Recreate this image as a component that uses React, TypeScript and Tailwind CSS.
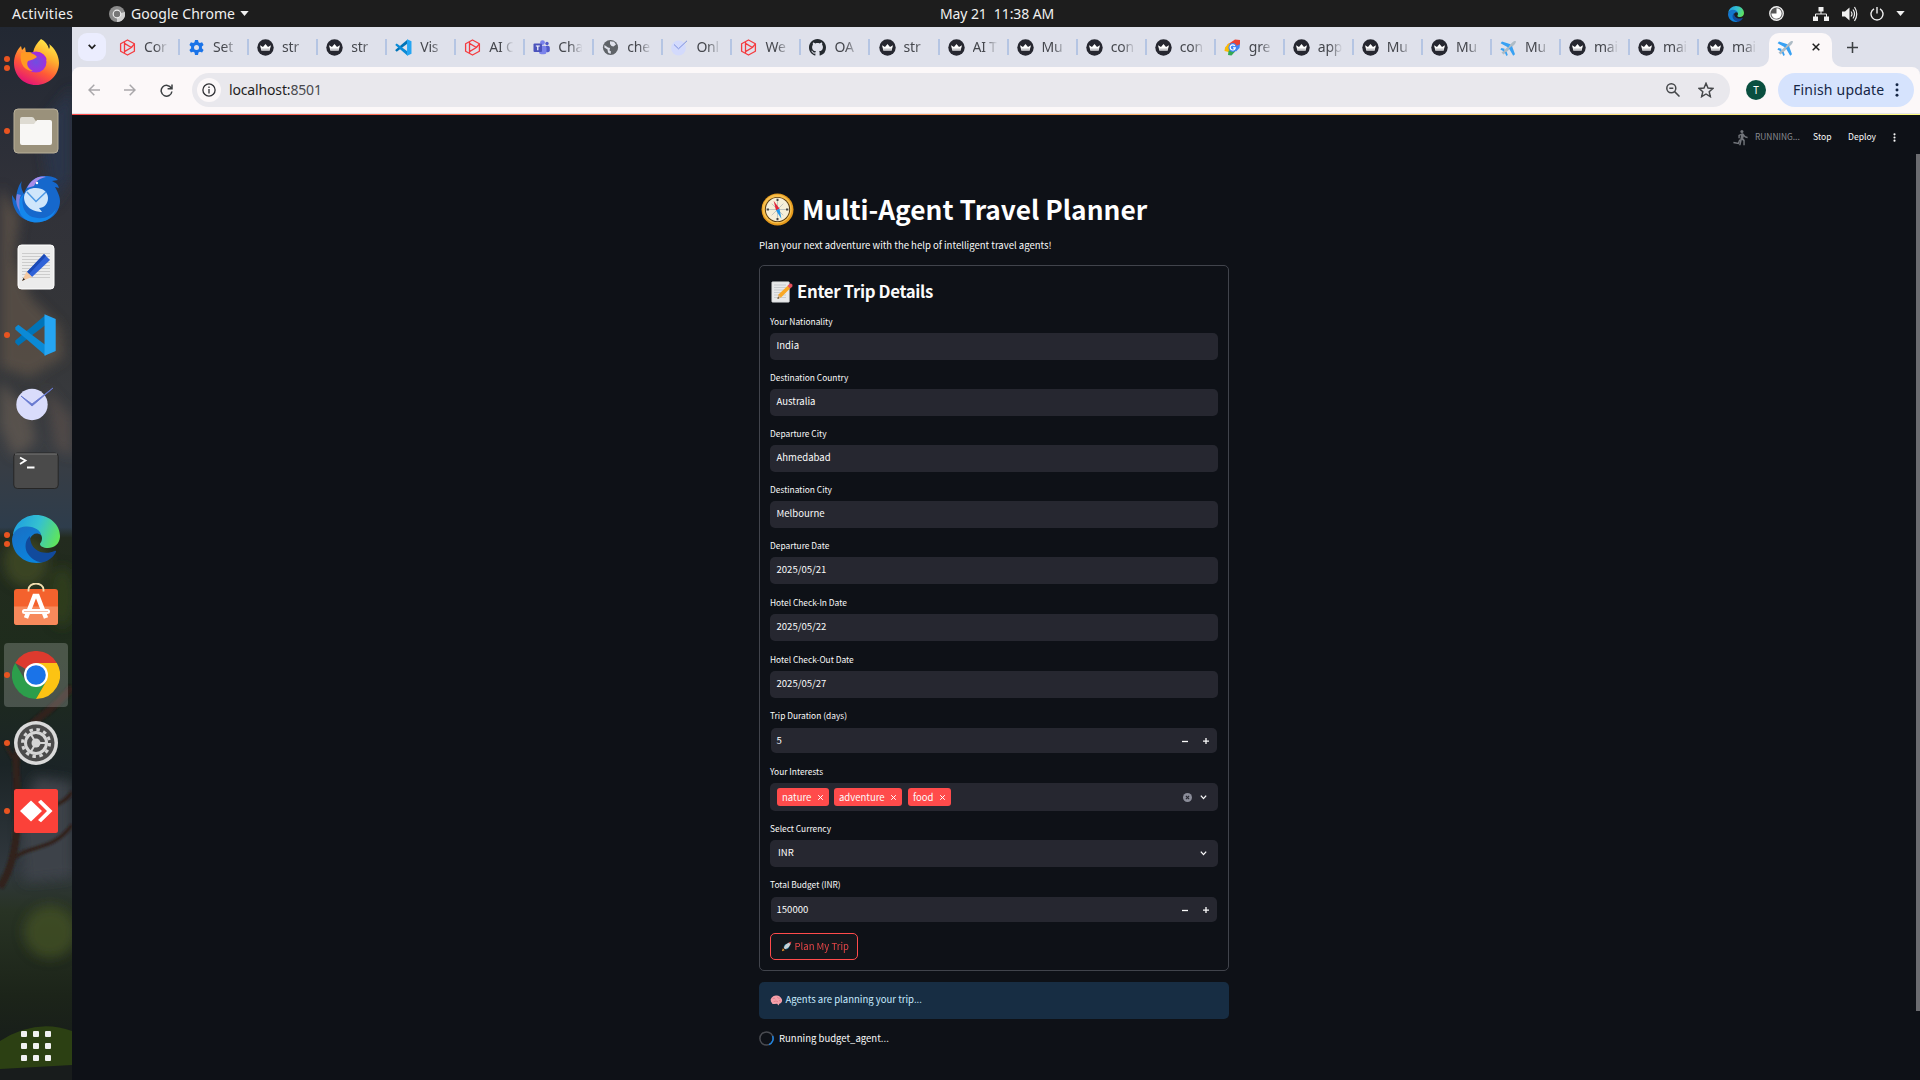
import React from "react";

const CROWN = "crown";
const TABS: [string, string][] = [
  ["pent", "Cor"], ["gear", "Set"], [CROWN, "str"], [CROWN, "str"], ["vs", "Vis"], ["pent", "AI C"], ["teams", "Cha"],
  ["globe", "che"], ["tick", "Onl"], ["pent", "We"], ["github", "OA"], [CROWN, "str"], [CROWN, "AI T"], [CROWN, "Mu"],
  [CROWN, "con"], [CROWN, "con"], ["google", "gre"], [CROWN, "app"], [CROWN, "Mu"], [CROWN, "Mu"], ["plane", "Mu"],
  [CROWN, "mai"], [CROWN, "mai"], [CROWN, "mai"],
];

const VsCode = () => (
  <>
    <path d="M3 68 10 75 74 26V3L3 63Z" fill="#0074b8" />
    <path d="M3 32 10 26 74 74V98L3 37Z" fill="#0b8ad6" />
    <path d="M71 2 97 13V87L71 98Z" fill="#25a5f2" />
  </>
);

const Plane = () => (
  <g>
    <path d="M1.5 13.4 4.5 11 12.5 3.2C13.8 2 15.3 1.6 15.8 2.2 16.3 2.8 15.6 4.2 14.5 5.4L6 13.5 3.5 15.5Z" fill="#aebcc6" />
    <path d="M10.5 5.2 2 2.4 .6 4.2 8.2 8.6ZM12 7 15 15.2 13.2 16.8 9 9.6ZM4.6 9.800 1.400 9 .4 10.500 4 12.500ZM6.600 12.800 7.800 16 6.400 17 4.800 13.600Z" fill="#38a1f3" />
  </g>
);

function Favicon({ kind }: { kind: string }) {
  return (
    <svg viewBox="0 0 17 17" className="h-[17px] w-[17px] shrink-0">
      {kind === "crown" && (
        <>
          <circle cx="8.5" cy="8.5" r="8.2" fill="#262730" />
          <path d="M3 6.2 6 8 8.5 5 11 8 14 6.2 12.6 11.5H4.4Z" fill="#fff" />
          <path d="M4 9.4H13L12.6 11.5H4.4Z" fill="#c8c8cc" />
        </>
      )}
      {kind === "pent" && (
        <g fill="none" stroke="#f43b3f" strokeWidth="1.3" strokeLinejoin="round">
          <path d="M8.5 1 15.4 4.8V12.2L8.5 16 1.6 12.2V4.8Z" />
          <path d="M5.5 3 V14M5.5 4.4 12.4 8.5 5.5 12.6M12.4 8.5 15.4 4.8" />
        </g>
      )}
      {kind === "gear" && (
        <g fill="#1a73e8">
          <path d="M7 1h3l.5 2.2 1.4.8 2.2-.7 1.5 2.6-1.7 1.6v1.8l1.7 1.6-1.5 2.6-2.2-.7-1.4.8L10 16H7l-.5-2.4-1.4-.8-2.2.7-1.5-2.6 1.7-1.6V7.500L1.400 5.900l1.500-2.600 2.200.7 1.400-.8Z" />
          <circle cx="8.500" cy="8.500" r="2.500" fill="#dfe1eb" />
        </g>
      )}
      {kind === "vs" && <g transform="scale(.17)"><VsCode /></g>}
      {kind === "teams" && (
        <g>
          <circle cx="9.500" cy="3.600" r="2.400" fill="#7b83eb" />
          <circle cx="14" cy="4.500" r="1.700" fill="#5059c9" />
          <rect x="12" y="6.800" width="4.800" height="6.500" rx="2" fill="#5059c9" />
          <rect x="6" y="6.800" width="7.500" height="8.500" rx="2.500" fill="#7b83eb" />
          <rect x=".5" y="4.500" width="8.500" height="8.500" rx="1" fill="#4b53bc" />
          <path d="M2.800 7H6.800M4.800 7V11.300" stroke="#fff" strokeWidth="1.200" />
        </g>
      )}
      {kind === "globe" && (
        <>
          <circle cx="8.500" cy="8.500" r="7.600" fill="#5f6368" />
          <path d="M2.500 6 6 8.500 8 9 7.500 11.500 9 12.500 8.500 15 6 13.500 5.500 10.500 2.300 8.500ZM8 2.200 12 2.800 14 5.500 11.500 7.500 9.500 7 8 5Z" fill="#dfe1eb" />
        </>
      )}
      {kind === "tick" && (
        <>
          <circle cx="7.500" cy="9" r="7.400" fill="#d3dafc" />
          <path d="M3 5.500 7.500 9.800 16 1.800" fill="none" stroke="#7d90de" strokeWidth="1" />
        </>
      )}
      {kind === "github" && (
        <path
          transform="scale(1.0625)"
          fill="#24292f"
          fillRule="evenodd"
          d="M8 0C3.58 0 0 3.58 0 8c0 3.54 2.29 6.53 5.47 7.59.4.07.55-.17.55-.38 0-.19-.01-.82-.01-1.49-2.01.37-2.53-.49-2.690-.94-.09-.23-.48-.94-.82-1.130-.28-.15-.68-.52-.01-.53.63-.01 1.080.58 1.230.82.72 1.210 1.870.87 2.330.66.07-.52.28-.87.51-1.070-1.780-.2-3.640-.89-3.640-3.950 0-.87.31-1.590.82-2.150-.08-.2-.36-1.020.08-2.120 0 0 .67-.21 2.200.82.64-.18 1.320-.27 2-.27s1.360.09 2 .27c1.530-1.040 2.200-.82 2.200-.82.44 1.100.16 1.920.08 2.120.51.56.82 1.270.82 2.150 0 3.070-1.870 3.750-3.650 3.950.29.25.54.73.54 1.480 0 1.070-.01 1.930-.01 2.200 0 .21.15.46.55.38A8.013 8.013 0 0 0 16 8c0-4.420-3.580-8-8-8Z"
        />
      )}
      {kind === "google" && (
        <>
          <path d="M3 6 11 .5 16 1V6L8.500 8.500Z" fill="#ea4335" />
          <path d="M1 8.500 5 4 8 8.500 4.500 13 .5 12Z" fill="#fbbc04" />
          <path d="M4.500 12 10 8 12.500 11 7.500 16.500 4 16Z" fill="#34a853" />
          <path d="M16 5 15.500 9 12 12.500 9 9Z" fill="#4285f4" />
          <circle cx="8.800" cy="8.500" r="4.400" fill="#4285f4" />
          <path d="M10.800 6.800A2.600 2.600 0 1 0 11.300 8.800H9" fill="none" stroke="#fff" strokeWidth="1.200" />
        </>
      )}
      {kind === "plane" && <Plane />}
    </svg>
  );
}

function EdgeArt() {
  return (
    <>
      <defs>
        <linearGradient id="edgeTop" x1="0" y1=".3" x2="1" y2=".6">
          <stop offset="0" stopColor="#1e9fe0" />
          <stop offset=".5" stopColor="#35c1d0" />
          <stop offset="1" stopColor="#5fe45c" />
        </linearGradient>
        <linearGradient id="edgeLow" x1="0" y1="0" x2=".6" y2="1">
          <stop offset="0" stopColor="#1a6fc4" />
          <stop offset="1" stopColor="#0a84dc" />
        </linearGradient>
      </defs>
      <path d="M1 20C2 9 12 0 24 0c14 0 24 10 24 21 0 8-6 12-12 12-5 0-8-2-8-4 0-1 2-2 2-6 0-5-6-9-14-9C9 14 4 16 1 20Z" fill="url(#edgeTop)" />
      <path d="M0 24C1 16 7 11 15 11.500c8 0 14 4.500 14 8.500-5-4-12 0-12 9 0 9 8 16 14 18C16 51 0 41 0 24Z" fill="url(#edgeLow)" />
      <path d="M18 21C13 25 12 33 16 39c5 7 12 9 16 8 6-2 10-6 12-10 .5-1-.4-1.500-1.500-1C33 40.500 18 37 18 21Z" fill="#114a9c" />
    </>
  );
}

function DockIcon({ kind }: { kind: string }) {
  return (
    <svg viewBox="0 0 48 48" className="h-12 w-12">
      {kind === "firefox" && (
        <g transform="translate(0 -1)">
          <defs>
            <linearGradient id="ffBody" x1=".8" y1="0" x2=".3" y2="1">
              <stop offset="0" stopColor="#fff44f" />
              <stop offset=".35" stopColor="#ffb02e" />
              <stop offset=".65" stopColor="#ff5a36" />
              <stop offset="1" stopColor="#e3107a" />
            </linearGradient>
            <radialGradient id="ffCore">
              <stop offset="0" stopColor="#6f4fe0" />
              <stop offset="1" stopColor="#a030dd" />
            </radialGradient>
          </defs>
          <path d="M29 1c4 2 7 6 8 10 1-2 1-3 0-5 6 4 10 12 10 19 0 12-10 22-23 22S2 37 2 25C2 18 5 12 9 8l1 4 3-3 1 6c3-1 4-1 7 0C22 9 25 5 29 1Z" fill="url(#ffBody)" />
          <circle cx="24" cy="24" r="10.500" fill="url(#ffCore)" />
          <path d="M9 15c5-2 9-1 14 2l2 2c-2 2-6 3-9 4-2 3 0 8 5 10-8 0-14-7-12-18Z" fill="#ff9a22" />
          <path d="M21 15c5-2 12 0 14 7-2-2-4-3-6-3-2-2-5-3-8-4Z" fill="#a32ddb" />
        </g>
      )}
      {kind === "files" && (
        <>
          <rect x="2" y="2" width="44" height="44" rx="4" fill="#9a917b" stroke="#b9b09a" />
          <path d="M8 17V12q0-2 2-2h10q2 0 3 3l2 2v3Z" fill="#dedbd2" />
          <path d="M8 17h14l3-4h13q2 0 2 2v21q0 2-2 2H10q-2 0-2-2Z" fill="#f8f7f5" />
        </>
      )}
      {kind === "thunderbird" && (
        <>
          <path d="M10 6c-2 5 0 9 2 13C15 9 22 1 33 1c6 0 10 1 13 4l-6 1c4 2 6 3 7 7l-4-1c4 7 5 11 5 14 0 12-10 21-23 21C9 47 0 36 0 20l4 6C4 18 6 11 10 6Z" fill="#1668cc" />
          <path d="M15 13C19 5 26 0 34 2c-6 1-10 4-12 9Z" fill="#a78ce8" />
          <path d="M12 19C9 25 10 36 18 41c9 4 20 3 26-7-4 14-25 19-35 6C4 31 7 23 12 19Z" fill="#1487ec" />
          <path d="M5 19C3 26 5 32 8 36 7 29 7 24 9 20Z" fill="#7f7fdc" />
          <path d="M12 22C13 15 18 13 24 13c7 0 12 4 12 10s-4 10-9 10l3 4c-7 0-18-4-18-15Z" fill="#cfe6fb" />
          <path d="M15 17 24 26.500 34 17" fill="none" stroke="#4d98e3" strokeWidth="1.500" />
          <circle cx="25" cy="8" r="1.200" fill="#fff" />
        </>
      )}
      {kind === "writer" && (
        <>
          <rect x="6" y="2" width="36" height="44" rx="3.500" fill="#ececec" stroke="#fff" />
          <path d="M10 10.500H38M10 13.500H38M10 16.500H38M10 19.500H38M10 22.500H38M10 25.500H38M10 28.500H38M10 31.500H38M10 34.500H38" stroke="#c4c4c4" strokeWidth=".8" />
          <path d="M15 29 32 11 38 17 20 34Z" fill="#2f62d8" />
          <path d="M15 29 32 11 34 13 17 31Z" fill="#1a49b5" />
          <path d="M10 38 14.500 28.500 20 34Z" fill="#f4c8a0" />
          <path d="M10 38 11.500 35 13 36.500Z" fill="#222" />
        </>
      )}
      {kind === "vscode" && <g transform="translate(2 2.500) scale(.43)"><VsCode /></g>}
      {kind === "clock" && (
        <>
          <circle cx="20" cy="25.500" r="15.700" fill="#d9dcfb" />
          <path d="M9 17 20 27 41 9 20 25Z" fill="#6678cf" stroke="#6678cf" strokeWidth=".9" />
        </>
      )}
      {kind === "terminal" && (
        <>
          <rect x="1.800" y="6" width="44.400" height="35.500" rx="3.500" fill="#4a4a4a" stroke="#262626" />
          <path d="M3 7H45" stroke="#777" />
          <path d="M8 10.500 13.500 13.500 8 17M15 20.500H22.500" fill="none" stroke="#fff" strokeWidth="1.800" />
        </>
      )}
      {kind === "edge" && <EdgeArt />}
      {kind === "store" && (
        <g transform="translate(0 -2.500)">
          <rect x="2" y="8.500" width="44" height="36" rx="3" fill="#f4622d" />
          <path d="M2 26H46V41.500q0 3-3 3H5q-3 0-3-3Z" fill="#f7895b" />
          <path d="M16.500 11V9a7.500 6 0 0 1 15 0v2" fill="none" stroke="#f3deb0" strokeWidth="1.800" />
          <path d="M14 37.500 22.500 15.500H25.500L34 37.500" fill="none" stroke="#fff" strokeWidth="4.500" />
          <path d="M12.500 31H35.500" stroke="#fff" strokeWidth="5" strokeLinecap="round" />
          <path d="M12 31H36" stroke="#f0a080" strokeWidth=".7" />
        </g>
      )}
      {kind === "chrome" && (
        <>
          <path d="M24 24 3.200 12A24 24 0 0 1 44.800 12Z" fill="#dd3a2e" />
          <path d="M3.200 12 13.600 30 34.400 30 24 48A24 24 0 0 1 3.200 12Z" fill="#2c9e4b" />
          <path d="M24 12H44.800A24 24 0 0 1 24 48L34.400 30Z" fill="#fcc313" />
          <circle cx="24" cy="24" r="12" fill="#fff" />
          <circle cx="24" cy="24" r="9.800" fill="#1a73e8" />
        </>
      )}
      {kind === "settings" && (
        <>
          <circle cx="24" cy="24" r="22" fill="#dadada" />
          <circle cx="24" cy="24" r="18.500" fill="#4b4b4b" />
          <circle cx="24" cy="24" r="13.500" fill="none" stroke="#d5d5d5" strokeWidth="3" strokeDasharray="3.500 3.570" />
          <circle cx="24" cy="24" r="10.500" fill="none" stroke="#d5d5d5" strokeWidth="3" />
          <circle cx="24" cy="24" r="4.500" fill="#d5d5d5" />
          <path d="M24 24H34M24 24 19 15.500M24 24 19 32.500" stroke="#d5d5d5" strokeWidth="2" />
        </>
      )}
      {kind === "anydesk" && (
        <>
          <rect x="2" y="2" width="44" height="44" rx="2.500" fill="#fb4139" />
          <path d="M8 24 19 13.500 30 24 19 34.500Z" fill="#fff" />
          <path d="M26 15 29 12.800 40.500 24 29 35.200 26 33 35 24Z" fill="#fff" />
        </>
      )}
    </svg>
  );
}

// [icon, number of open windows]
const DOCK: [string, number][] = [
  ["firefox", 2], ["files", 1], ["thunderbird", 0], ["writer", 0], ["vscode", 1], ["clock", 0],
  ["terminal", 0], ["edge", 2], ["store", 0], ["chrome", 1], ["settings", 1], ["anydesk", 1],
];

function Wallpaper() {
  return (
    <svg viewBox="0 0 72 1053" className="absolute inset-0 h-full w-full" preserveAspectRatio="none">
      <defs>
        <linearGradient id="wall" x1="0" y1="0" x2="0" y2="1">
          <stop offset="0" stopColor="#222833" />
          <stop offset=".15" stopColor="#303139" />
          <stop offset=".3" stopColor="#353638" />
          <stop offset=".4" stopColor="#3a3d42" />
          <stop offset=".475" stopColor="#2e3d4c" />
          <stop offset=".485" stopColor="#232b1f" />
          <stop offset=".6" stopColor="#1e2c1c" />
          <stop offset=".7" stopColor="#1b2426" />
          <stop offset=".8" stopColor="#31383e" />
          <stop offset=".84" stopColor="#283324" />
          <stop offset=".92" stopColor="#1c2419" />
          <stop offset="1" stopColor="#14191b" />
        </linearGradient>
        <filter id="soft" x="-50%" y="-50%" width="200%" height="200%"><feGaussianBlur stdDeviation="6" /></filter>
        <filter id="soft2" x="-50%" y="-50%" width="200%" height="200%"><feGaussianBlur stdDeviation="1" /></filter>
      </defs>
      <rect width="72" height="1053" fill="url(#wall)" />
      <g filter="url(#soft)">
        <path d="M0 160 20 190 14 230 30 270 60 300 64 330 30 350 0 340Z" fill="#5c5349" opacity=".8" />
        <path d="M0 355 30 385 36 415 14 430 0 400Z" fill="#6d6055" opacity=".6" />
        <path d="M45 360 72 390V430L55 420Z" fill="#65584e" opacity=".5" />
        <path d="M40 100 72 60V150L52 180Z" fill="#2a3448" />
        <ellipse cx="26" cy="535" rx="22" ry="25" fill="#4b5527" opacity=".6" />
        <ellipse cx="62" cy="570" rx="14" ry="30" fill="#35451f" opacity=".7" />
        <ellipse cx="50" cy="905" rx="26" ry="26" fill="#4a5723" opacity=".65" />
        <path d="M35 750 72 755V850L25 855 20 800Z" fill="#3d434a" />
      </g>
      <g filter="url(#soft2)" fill="none" stroke="#30201a">
        <path d="M0 860C20 830 18 790 16 735 20 690 40 700 72 660" strokeWidth="7" />
        <path d="M8 838C24 815 50 828 72 798M22 800C34 775 60 785 72 765M18 740 4 715" strokeWidth="3.500" />
      </g>
      <path d="M0 1018Q36 995 72 1008V1046L0 1052Z" transform="translate(0 -4)" fill="#2c4013" />
      <path d="M0 1042 72 1038V1053H0Z" fill="#181c1c" />
    </svg>
  );
}

function Dock() {
  return (
    <aside className="relative flex w-[72px] shrink-0 flex-col">
      <Wallpaper />
      <div className="relative flex flex-1 flex-col pt-0.5">
        {DOCK.map(([kind, dots]) => (
          <div key={kind} className="relative flex h-[68px] items-center justify-center">
            {kind === "chrome" && <div className="absolute h-16 w-16 rounded-[4px] bg-white/20" />}
            <div className="absolute left-1 flex flex-col gap-[3px]">
              {dots > 0 && <i className="h-1.5 w-1.5 rounded-full bg-[#e95420]" />}
              {dots > 1 && <i className="h-1.5 w-1.5 rounded-full bg-[#e95420]" />}
            </div>
            <div className="relative"><DockIcon kind={kind} /></div>
          </div>
        ))}
        <div className="mt-auto mb-[19px] grid grid-cols-3 gap-1.5 self-center">
          {Array.from({ length: 9 }, (_, i) => <i key={i} className="h-1.5 w-1.5 rounded-[1px] bg-[#f2f2f2]" />)}
        </div>
      </div>
    </aside>
  );
}

function TopBar() {
  return (
    <header className="flex h-[27px] shrink-0 items-center bg-[#1d1d1d] font-['Noto_Sans',sans-serif] text-[14px] leading-[26px] text-[#f0f0f0]">
      <div className="flex w-[940px] items-center pl-3">
        <span className="w-[97px] tracking-[0.3px]">Activities</span>
        <svg viewBox="0 0 16 16" className="h-4 w-4">
          <circle cx="8" cy="8" r="8" fill="#8b8b8b" />
          <path d="M8 8 16 6A8 8 0 0 1 8 16Z" fill="#cfcfcf" />
          <circle cx="8" cy="8" r="3.800" fill="#777" stroke="#eee" strokeWidth="1.200" />
        </svg>
        <span className="ml-1.5 w-[109px] tracking-[0.05px]">Google Chrome</span>
        <svg viewBox="0 0 10 6" className="h-[5px] w-[9px]"><path d="M0 0H10L5 6Z" fill="#f0f0f0" /></svg>
      </div>
      <div className="tracking-[-0.1px] whitespace-pre">May 21&nbsp; 11:38 AM</div>
      <div className="flex flex-1 items-center justify-end pr-[15px]">
        <svg viewBox="0 0 48 48" className="mr-[25px] h-4 w-4"><EdgeArt /></svg>
        <svg viewBox="0 0 16 16" className="mr-[29px] h-[15px] w-[15px]">
          <circle cx="8" cy="8" r="7.200" fill="#555" stroke="#f0f0f0" strokeWidth="1.400" />
          <path d="M8 8V2.500A5.500 5.500 0 1 1 2.500 8Z" fill="#fff" />
        </svg>
        <svg viewBox="0 0 16 14" className="mr-[13px] h-[14px] w-4" fill="#f0f0f0">
          <path d="M5.500 0h5v4.500h-5ZM0 9.500h5V14H0ZM11 9.500h5V14h-5Z" />
          <path d="M8 4V7M2.500 10V7H13.500V10" fill="none" stroke="#f0f0f0" />
        </svg>
        <svg viewBox="0 0 16 16" className="mr-3 h-4 w-4">
          <path d="M0 5.500H3L7.500 1.500V14.500L3 10.500H0Z" fill="#f0f0f0" />
          <path d="M9 5.500Q11 8 9 10.500M11 3.500Q14 8 11 12.500M12.500 1Q17 8 12.500 15" fill="none" stroke="#f0f0f0" strokeWidth="1.200" />
        </svg>
        <svg viewBox="0 0 14 14" className="mr-3 h-[14px] w-[14px]" fill="none" stroke="#f0f0f0" strokeWidth="1.400">
          <path d="M4 1.800A6 6 0 1 0 10 1.800M7 0V6.500" />
        </svg>
        <svg viewBox="0 0 10 6" className="h-[5px] w-[9px]"><path d="M0 0H10L5 6Z" fill="#f0f0f0" /></svg>
      </div>
    </header>
  );
}

function TabStrip() {
  return (
    <div className="flex h-10 shrink-0 items-center bg-[#dfe1eb] pl-1.5 font-['Noto_Sans',sans-serif] text-[14px] text-[#45474d]">
      <div className="mr-[13px] flex h-7 w-7 items-center justify-center rounded-[9px] bg-[#ebedfe]">
        <svg viewBox="0 0 8 6" className="h-1.5 w-2"><path d="M.7.8 4 4.300 7.300.8" fill="none" stroke="#1f1f1f" strokeWidth="1.700" /></svg>
      </div>
      {TABS.map(([icon, label], i) => (
        <div key={i} className="flex w-[69.05px] shrink-0 items-center">
          <Favicon kind={icon} />
          <div className="ml-2 w-[25px] overflow-hidden pb-0.5 tracking-[-0.2px] whitespace-nowrap [mask-image:linear-gradient(to_right,#000_45%,transparent_98%)]">{label}</div>
          {i < 23 && <i className="ml-[9px] h-4 w-0.5 bg-[#b5c5e3]" />}
        </div>
      ))}
      <div className="relative ml-[-7px] flex h-[34px] w-[63px] items-center self-end rounded-t-[10px] bg-[#fcf8f9] pb-1.5 pl-2">
        <svg viewBox="0 0 10 10" className="absolute bottom-0 -left-[10px] h-[10px] w-[10px]"><path d="M10 0V10H0A10 10 0 0 0 10 0Z" fill="#fcf8f9" /></svg>
        <svg viewBox="0 0 10 10" className="absolute -right-[10px] bottom-0 h-[10px] w-[10px]"><path d="M0 0V10H10A10 10 0 0 1 0 0Z" fill="#fcf8f9" /></svg>
        <Favicon kind="plane" />
        <svg viewBox="0 0 8 8" className="ml-[18px] h-2 w-2"><path d="M.7.7 7.300 7.300M7.300.7.7 7.300" stroke="#1f1f1f" strokeWidth="1.500" /></svg>
      </div>
      <svg viewBox="0 0 10 10" className="ml-[15px] h-[11px] w-[11px]"><path d="M5 0V10M0 5H10" stroke="#3c4043" strokeWidth="1.400" /></svg>
    </div>
  );
}

function Toolbar() {
  return (
    <div className="flex shrink-0 flex-col bg-[#dfe1eb] font-['Noto_Sans',sans-serif]">
      <div className="flex h-[46px] items-center rounded-t-[8px] bg-[#fcf8f9] pr-1.5 pl-4">
        <svg viewBox="0 0 12 12" className="h-3 w-3" fill="none" stroke="#a9a7aa" strokeWidth="1.500"><path d="M12 6H1M6.300.7 1 6 6.300 11.300" /></svg>
        <svg viewBox="0 0 12 12" className="ml-6 h-3 w-3" fill="none" stroke="#a9a7aa" strokeWidth="1.500"><path d="M0 6H11M5.700.7 11 6 5.700 11.300" /></svg>
        <svg viewBox="0 0 13 13" className="ml-6 h-[13px] w-[13px]" fill="none" stroke="#3c4043" strokeWidth="1.500"><path d="M11.300 4.200A5.400 5.400 0 1 0 11.900 7.500M12 .5V4.700H7.600" /></svg>
        <div className="ml-[19px] flex h-[34px] flex-1 items-center rounded-full bg-[#e9e8ed] pl-[5px]">
          <div className="flex h-6 w-6 items-center justify-center rounded-full bg-[#fcf8f9]">
            <svg viewBox="0 0 14 14" className="h-[14px] w-[14px]"><circle cx="7" cy="7" r="6.100" fill="none" stroke="#303134" strokeWidth="1.300" /><path d="M7 6V10.500M7 3.500V5" stroke="#303134" strokeWidth="1.300" /></svg>
          </div>
          <span className="ml-2 flex-1 pb-0.5 text-[14px] tracking-[-0.15px] text-[#1f1f1f]">localhost:<span className="text-[#4a4a4f]">8501</span></span>
          <svg viewBox="0 0 14 14" className="mr-[18px] h-[14px] w-[14px]" fill="none" stroke="#45474a" strokeWidth="1.500"><circle cx="5.300" cy="5.300" r="4.500" /><path d="M8.600 8.600 13.500 13.500M3.300 5.300H7.300" /></svg>
          <svg viewBox="0 0 24 24" className="mr-4 h-4 w-4" fill="none" stroke="#45474a" strokeWidth="2.200"><path d="m12 2 3 7 7.500.600-5.700 5 1.700 7.400L12 18l-6.500 4 1.700-7.400-5.700-5L9 9Z" /></svg>
        </div>
        <div className="ml-4 flex h-5 w-5 items-center justify-center rounded-full bg-[#0a4f40] text-[10px] text-white">T</div>
        <div className="ml-3 flex h-[34px] w-[136px] items-center rounded-full bg-[#d6e3fd] pl-[15px] text-[14px] tracking-[0.2px] whitespace-nowrap text-[#152645]">
          <span className="w-[102px] pb-0.5">Finish update</span>
          <svg viewBox="0 0 4 16" className="h-[14px] w-1" fill="#152645"><circle cx="2" cy="2" r="1.700" /><circle cx="2" cy="8" r="1.700" /><circle cx="2" cy="14" r="1.700" /></svg>
        </div>
      </div>
      <div className="h-px bg-[#e4e2e6]" />
    </div>
  );
}

const Chevron = () => (
  <svg viewBox="0 0 8 6" className="h-[5px] w-[7px]"><path d="M.8.8 4 4.300 7.200.8" fill="none" stroke="#fafafa" strokeWidth="1.600" /></svg>
);

function Label({ children, h }: { children: React.ReactNode; h: string }) {
  return <div className={`flex items-end text-[8.4px] ${h}`}><span className="h-[18px] leading-[13px]">{children}</span></div>;
}

function TextField({ label, value, h = "h-[29px]" }: { label: string; value: string; h?: string }) {
  return (
    <div>
      <Label h={h}>{label}</Label>
      <div className="h-[27px] rounded-[5px] bg-[#262730] pl-[6.500px] text-[9.55px] leading-[25px]">{value}</div>
    </div>
  );
}

function NumberField({ label, value, h }: { label: string; value: string; h: string }) {
  return (
    <div>
      <Label h={h}><span className="inline-block -translate-y-px">{label}</span></Label>
      <div className="mx-px flex h-[25px] items-center rounded-[5px] bg-[#262730] pr-2 pl-[5.500px] text-[9.55px]">
        <span className="flex-1 pb-px leading-[21px]">{value}</span>
        <svg viewBox="0 0 6 6" className="mr-[15px] h-1.5 w-1.5"><path d="M0 3.500H6" stroke="#fafafa" strokeWidth="1.300" /></svg>
        <svg viewBox="0 0 6 6" className="h-1.5 w-1.5"><path d="M0 3.200H6M3 0V6" stroke="#fafafa" strokeWidth="1.300" /></svg>
      </div>
    </div>
  );
}

function Tag({ children, w }: { children: string; w: string }) {
  return (
    <div className={`flex h-[18px] items-center justify-between rounded-[3px] bg-[#ff4b4b] pr-[6px] pl-[5px] text-[9.55px] leading-[18px] ${w}`}>
      <span>{children}</span>
      <svg viewBox="0 0 5 5" className="h-[5px] w-[5px]"><path d="M.2.2 4.800 4.800M4.800.2.2 4.800" stroke="#fff" strokeWidth="1" /></svg>
    </div>
  );
}

function Compass() {
  return (
    <svg viewBox="0 0 34 34" className="h-[33px] w-[33px]">
      <circle cx="17" cy="17" r="16.500" fill="#e59a1c" />
      <circle cx="16.600" cy="16.500" r="15" fill="#f7bf4d" />
      <circle cx="17" cy="17" r="13" fill="#55380e" />
      <circle cx="17" cy="17" r="12" fill="#f6efd9" />
      <path d="M17 8V26M8 17H26M11 11 23 23M23 11 11 23" stroke="#9ba7ad" strokeWidth=".6" />
      <path d="M17 5.800v2.400M17 25.800V28.200M5.800 17H8.200M25.800 17H28.200" stroke="#444" strokeWidth="2" />
      <path d="M13 8 19 16 15.500 18Z" fill="#e0243a" />
      <path d="M21 26.500 19 16 15.500 18Z" fill="#2196e8" />
    </svg>
  );
}

function Memo() {
  return (
    <svg viewBox="0 0 22 22" className="h-[22px] w-[22px]">
      <rect x=".8" y=".8" width="17.500" height="20.400" rx=".8" fill="#e8e9ea" stroke="#c9cccd" strokeWidth=".6" />
      <path d="M3 4H15M3 6.500H15M3 9H15M3 11.500H15M3 14H15M3 16.500H15" stroke="#b4babd" strokeWidth=".6" />
      <path d="M6.500 17.800 7.500 13.500 17 4.500 19.500 7 10 16.500Z" fill="#f9a825" />
      <path d="M6.500 17.800 7.500 13.500 10 16.500Z" fill="#d8b58a" />
      <path d="M6.500 17.800 7 15.800 8.300 17.200Z" fill="#333" />
      <path d="M16.500 5 18.500 2.800Q20 2 21.200 3.400 22 5 21 6L19 7.500Z" fill="#e8505b" />
    </svg>
  );
}

function PageHeader() {
  return (
    <div className="flex h-11 shrink-0 items-center justify-end pr-6 text-[8.4px] text-[#fafafa]">
      <svg viewBox="0 0 24 24" className="h-[17px] w-[17px]" fill="#72757b">
        <circle cx="14" cy="3.500" r="2.200" />
        <path d="M9.800 8.900 7 23h2.100l1.800-8 2.100 2v6h2v-7.500l-2.100-2 .6-3A7.300 7.300 0 0 0 19 13v-2c-1.900 0-3.500-1-4.300-2.400l-1-1.600c-.4-.6-1-1-1.700-1-.3 0-.5.1-.8.1L6 8.300V13h2V9.600l1.800-.7" transform="translate(3 0)" />
        <path d="M2 19 9 20.500 11 15" stroke="#72757b" strokeWidth="2" fill="none" />
      </svg>
      <span className="ml-1.5 w-[58px] pb-px text-[#8a8c92]">RUNNING...</span>
      <span className="w-[35px] pb-0.5 text-[8.6px]">Stop</span>
      <span className="w-[45px] pb-0.5 text-[8.6px]">Deploy</span>
      <svg viewBox="0 0 3 10" className="h-[9px] w-[3px]" fill="#fafafa"><circle cx="1.500" cy="1.500" r="1.200" /><circle cx="1.500" cy="5" r="1.200" /><circle cx="1.500" cy="8.500" r="1.200" /></svg>
    </div>
  );
}

function Planner() {
  return (
    <main className="ml-[687px] flex w-[470px] flex-col">
      <h1 className="mt-[34px] flex h-[33px] items-center text-[26.3px] font-bold text-white">
        <span className="ml-0.5 w-[41px]"><Compass /></span>
        <span className="pb-0.5 leading-[31px] whitespace-nowrap">Multi-Agent Travel Planner</span>
      </h1>
      <p className="mt-[11px] h-[28px] text-[9.55px] leading-[16px]">Plan your next adventure with the help of intelligent travel agents!</p>
      <section className="h-[706px] rounded-[5px] border border-[#41444c] px-[10px]">
        <h3 className="mt-[15px] flex h-[22px] items-center text-[16.800px] font-semibold tracking-[-0.35px] text-[#fafafa]">
          <span className="w-[27px] pl-px"><Memo /></span>
          <span className="pb-0.5 leading-[20px]">Enter Trip Details</span>
        </h3>
        <TextField h="h-[30px]" label="Your Nationality" value="India" />
        <TextField label="Destination Country" value="Australia" />
        <TextField label="Departure City" value="Ahmedabad" />
        <TextField label="Destination City" value="Melbourne" />
        <TextField label="Departure Date" value="2025/05/21" />
        <TextField h="h-[30px]" label="Hotel Check-In Date" value="2025/05/22" />
        <TextField h="h-[30px]" label="Hotel Check-Out Date" value="2025/05/27" />
        <NumberField h="h-[30px]" label="Trip Duration (days)" value="5" />
        <Label h="h-[30px]">Your Interests</Label>
        <div className="flex h-7 items-center rounded-[5px] bg-[#262730] pr-[11.500px] pl-[7px]">
          <div className="flex flex-1">
            <Tag w="w-[52px] mr-[5px]">nature</Tag>
            <Tag w="w-[68px] mr-1.5">adventure</Tag>
            <Tag w="w-[43px]">food</Tag>
          </div>
          <svg viewBox="0 0 10 10" className="mr-2 h-[9px] w-[9px]"><circle cx="5" cy="5" r="5" fill="#8b8d99" /><path d="M3.200 3.200 6.800 6.800M6.800 3.200 3.200 6.800" stroke="#262730" strokeWidth="1.200" /></svg>
          <Chevron />
        </div>
        <Label h="h-[29px]">Select Currency</Label>
        <div className="flex h-[27px] items-center rounded-[5px] bg-[#262730] pr-[11.500px] pl-2 text-[9.55px]">
          <span className="flex-1 pb-0.5 leading-[23px]">INR</span>
          <Chevron />
        </div>
        <NumberField h="h-[30px]" label="Total Budget (INR)" value="150000" />
        <button className="mt-[11px] flex h-[27px] w-[88px] items-center rounded-[5px] border border-[#ff4b4b] bg-[#13171c] pl-[9.500px] text-[9.55px] whitespace-nowrap text-[#ff4b4b]">
          <svg viewBox="0 0 12 12" className="mr-[3px] h-[11px] w-[11px]">
            <path d="M2.500 7 4.500 3.500 7 4ZM5 9.500 8.500 7.500 8 5Z" fill="#1c8fc0" />
            <path d="M3 7.500C4 4 7 1.500 11 1 10.500 5 8 8 4.500 9Z" fill="#c9d2d6" />
            <path d="M8.500 1.700 11.500.5 10.300 3.500Z" fill="#d9373e" />
            <path d="M1 11.300 2 8 4 10Z" fill="#f29a2e" />
          </svg>
          <span className="leading-[25px] opacity-90">Plan My Trip</span>
        </button>
      </section>
      <div className="mt-[11px] flex h-[37px] items-center rounded-[5px] bg-[#172d43] pl-[11px] text-[9.55px] text-[#c7ebff]">
        <svg viewBox="0 0 14 12" className="mr-[3px] h-[11px] w-[12.500px]">
          <path d="M1 7Q0 4 2 2.500 4 .3 7 .5 10 0 12 2.500 14.500 5 13 8 12 9.500 10.500 9.500L9.500 11.500 8 9.500 5 10Q2 10 1 7Z" fill="#f4a0aa" />
          <path d="M3 4Q5 2.500 6 4.500M8 2Q9 4 11 3.500M4 7.500Q7 5.500 9 7.500M10 6 12 6.500" fill="none" stroke="#d9707e" strokeWidth=".7" />
        </svg>
        <span className="pb-0.5 leading-[33px]">Agents are planning your trip...</span>
      </div>
      <div className="mt-3 flex items-center text-[9.550px]">
        <svg viewBox="0 0 15 15" className="h-[15px] w-[15px]" fill="none" strokeWidth="1.500">
          <circle cx="7.500" cy="7.500" r="6.600" stroke="#4a4c52" />
          <path d="M13.600 5A6.600 6.600 0 0 1 10 13.600" stroke="#1c83e1" />
        </svg>
        <span className="ml-[5px] leading-[15px]">Running budget_agent...</span>
      </div>
    </main>
  );
}

export default function App() {
  return (
    <div className="flex h-[1080px] w-[1920px] flex-col overflow-hidden bg-[#0e1117]">
      <TopBar />
      <div className="flex min-h-0 flex-1">
        <Dock />
        <div className="flex min-w-0 flex-1 flex-col">
          <TabStrip />
          <Toolbar />
          <div className="relative flex flex-1 flex-col bg-[#0e1117] font-['Noto_Sans_CJK_SC',sans-serif] text-[#fafafa]">
            <div className="h-px shrink-0 bg-gradient-to-r from-[#ff4b4b] via-[#ffa15e] to-[#fffd80]" />
            <PageHeader />
            <Planner />
            <div className="absolute top-10 right-0 h-[857px] w-1 bg-[#6b6c70]" />
          </div>
        </div>
      </div>
    </div>
  );
}
